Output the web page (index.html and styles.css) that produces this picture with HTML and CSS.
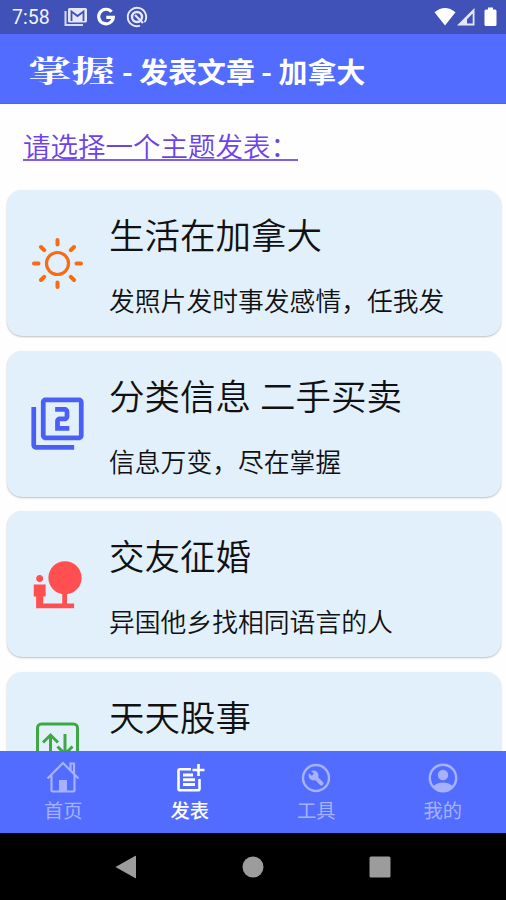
FILE: index.html
```
<!DOCTYPE html>
<html lang="zh-CN">
<head>
    <meta charset="UTF-8">
    <meta name="viewport" content="width=device-width, initial-scale=1.0">
    <title>掌握 - 发表文章</title>
    <link rel="stylesheet" href="styles.css">
</head>
<body>
    <div class="app">
        <div class="status-bar">
            <span class="time">7:58</span>
            <!-- Gmail -->
            <svg class="icon-mail" width="24" height="20" viewBox="0 0 24 20">
                <path d="M1.5 4v14H19" fill="none" stroke="#d5daf5" stroke-width="2"/>
                <rect x="4" y="1" width="19" height="14.5" rx="1.5" fill="#e4e7fa"/>
                <path d="M7.5 14V4.5l6 4.5 6-4.5V14" fill="none" stroke="#4051b8" stroke-width="1.8"/>
            </svg>
            <svg class="icon-google" width="20" height="20" viewBox="0 0 20 20">
                <path d="M15.6 4.8A7.3 7.3 0 1 0 17.3 10.3H10.3" fill="none" stroke="#fff" stroke-width="3.2"/>
            </svg>
            <svg class="icon-circle" width="22" height="22" viewBox="0 0 22 22" fill="none" stroke="#e8eafa">
                <path d="M14 19.7A9.2 9.2 0 1 1 18.5 16.3" stroke-width="1.9"/>
                <circle cx="11" cy="11" r="5" stroke-width="2.4"/>
                <path d="M9 9l8 8" stroke-width="2.2"/>
            </svg>
            <div class="status-right">
                <svg width="22" height="20" viewBox="0 0 22 20"><path d="M.5 5.2Q11-3.4 21.5 5.2L11 18.5z" fill="#fff"/></svg>
                <svg width="20" height="20" viewBox="0 0 20 20">
                    <path d="M18.5 1v17.5H1z" fill="#e4e7fa"/>
                    <path d="M16.7 6.5v10H11v-4.3z" fill="#4051b8"/>
                </svg>
                <svg class="battery" width="13" height="20" viewBox="0 0 13 20"><path d="M4 .5h5v2h2q1.5 0 1.5 1.5v13.5q0 1.5-1.5 1.5H2Q.5 19 .5 17.5V4Q.5 2.5 2 2.5h2z" fill="#fff"/></svg>
            </div>
        </div>

        <header class="header">
            <span class="brand">掌握</span>
            <h1>- 发表文章 - 加拿大</h1>
        </header>

        <main class="content">
            <a class="prompt">请选择一个主题发表：</a>

            <div class="card">
                <svg class="card-icon" viewBox="0 0 57 57" fill="none" stroke="#fa6a12" stroke-width="4" stroke-linecap="round">
                    <circle cx="28.5" cy="28.5" r="11" stroke-width="3.2"/>
                    <path d="M28.5 5v4.5M28.5 47.5V52M5 28.5h4.5M47.5 28.5H52M12 12l3.2 3.2M41.8 41.8L45 45M12 45l3.2-3.2M41.8 15.2L45 12"/>
                </svg>
                <div class="card-body">
                    <h2>生活在加拿大</h2>
                    <p>发照片发时事发感情，任我发</p>
                </div>
            </div>

            <div class="card">
                <svg class="card-icon" viewBox="0 0 24 24" fill="#4a60f5">
                    <path d="M3 5H1v16c0 1.1.9 2 2 2h16v-2H3V5zm18-4H7c-1.1 0-2 .9-2 2v14c0 1.1.9 2 2 2h14c1.1 0 2-.9 2-2V3c0-1.1-.9-2-2-2zm0 16H7V3h14v14zm-4-4h-4v-2h2c1.1 0 2-.89 2-2V7c0-1.11-.9-2-2-2h-4v2h4v2h-2c-1.1 0-2 .89-2 2v4h6v-2z"/>
                </svg>
                <div class="card-body">
                    <h2>分类信息 二手买卖</h2>
                    <p>信息万变，尽在掌握</p>
                </div>
            </div>

            <div class="card">
                <svg class="card-icon" viewBox="0 0 24 24" fill="#ff4f50">
                    <path d="M22.17 9.17c0-3.87-3.13-7-7-7s-7 3.13-7 7c0 3.47 2.52 6.34 5.83 6.89V20H6v-3h1v-5H2v5h1v5h16v-2h-3v-3.88c3.47-.41 6.17-3.36 6.17-6.95zM4.5 11c.83 0 1.5-.67 1.5-1.5S5.33 8 4.5 8 3 8.67 3 9.5 3.67 11 4.5 11z"/>
                </svg>
                <div class="card-body">
                    <h2>交友征婚</h2>
                    <p>异国他乡找相同语言的人</p>
                </div>
            </div>

            <div class="card">
                <svg class="card-icon" viewBox="0 0 57 57" fill="none" stroke="#3fa845" stroke-width="3">
                    <rect x="8.5" y="8" width="40" height="40" rx="4"/>
                    <path d="M21.5 39V19M14 26.5l7.5-7.5 7.5 7.5M36 18v20M28.5 30.5L36 38l7.5-7.5"/>
                </svg>
                <div class="card-body">
                    <h2>天天股事</h2>
                </div>
            </div>
        </main>

        <nav class="tabs">
            <div class="tab">
                <svg viewBox="0 0 34 34" fill="none" stroke="currentColor" stroke-width="2.2">
                    <path d="M1.5 17.5L17 2l15.500 15.500M5.500 14v15.500q0 1 1 1h21q1 0 1-1V14M24.500 9V2.500H28V13"/>
                    <path d="M13 19h8v11h-8z" fill="currentColor" stroke="none"/>
                </svg>
                <span>首页</span>
            </div>
            <div class="tab active">
                <svg viewBox="0 0 34 34" fill="none" stroke="currentColor" stroke-width="2.6">
                    <path d="M18 8.3H7q-1.5 0-1.5 1.5v18q0 1.5 1.5 1.5h18q1.5 0 1.5-1.5V18"/>
                    <path d="M10 14h10M10 18.7h12M10 23.5h12" stroke-width="3"/>
                    <path d="M25.5 3v12M19.5 9h12"/>
                </svg>
                <span>发表</span>
            </div>
            <div class="tab">
                <svg viewBox="0 0 34 34">
                    <circle cx="17" cy="17" r="13" fill="none" stroke="currentColor" stroke-width="2.4"/>
                    <circle cx="14.5" cy="14.5" r="5" fill="currentColor"/>
                    <path d="M15 15l7.5 7.5" stroke="currentColor" stroke-width="4" stroke-linecap="round"/>
                    <path d="M9 9l4.8 4.8" stroke="#516cff" stroke-width="3"/>
                </svg>
                <span>工具</span>
            </div>
            <div class="tab">
                <svg viewBox="0 0 34 34">
                    <circle cx="17" cy="17" r="13.2" fill="none" stroke="currentColor" stroke-width="2.4"/>
                    <circle cx="17" cy="14" r="5.2" fill="currentColor"/>
                    <path d="M7 25.5q4-4 10-4t10 4q-4 5.5-10 5.5T7 25.5z" fill="currentColor"/>
                </svg>
                <span>我的</span>
            </div>
        </nav>

        <div class="system-nav">
            <svg width="22" height="24" viewBox="0 0 22 24"><path d="M.5 12L20 1q1-.5 1 .5v21q0 1-1 .5z"/></svg>
            <svg width="22" height="22" viewBox="0 0 22 22"><circle cx="11" cy="11" r="10.5"/></svg>
            <svg width="22" height="22" viewBox="0 0 22 22"><rect x=".5" y=".5" width="21" height="21" rx="1.5"/></svg>
        </div>
    </div>
</body>
</html>
```
FILE: styles.css
```
* {
    margin: 0;
    padding: 0;
    box-sizing: border-box;
}

body {
    font-family: 'Noto Sans CJK SC', sans-serif;
    background: #fefefe;
    color: #111;
}

svg {
    display: block;
    flex-shrink: 0;
}

.app {
    height: 900px;
    display: flex;
    flex-direction: column;
    overflow: hidden;
}

.status-bar {
    height: 34px;
    flex-shrink: 0;
    display: flex;
    align-items: center;
    padding: 0 9px 0 12px;
    background: #4051b8;
}

.time {
    width: 52px;
    font-family: Roboto, sans-serif;
    font-size: 19.5px;
    line-height: 34px;
    padding-top: 2px;
    color: #f2f3fc;
}

.icon-google {
    margin-left: 8px;
}

.icon-circle {
    margin-left: 10px;
}

.status-right {
    display: flex;
    align-items: center;
    margin-left: auto;
}

.battery {
    margin-left: 8px;
}

.header {
    height: 70px;
    flex-shrink: 0;
    display: flex;
    align-items: center;
    padding-left: 28px;
    padding-top: 3px;
    background: #516cff;
    border-bottom: 1px solid #4862f2;
    color: #fff;
}

.brand {
    width: 94px;
    font-family: 'Noto Serif CJK SC', 'Noto Sans CJK SC', serif;
    font-size: 29px;
    font-weight: 700;
    line-height: 40px;
    white-space: nowrap;
    transform: scaleX(1.5);
    transform-origin: left center;
}

.header h1 {
    font-size: 28.9px;
    font-weight: 700;
    line-height: 38px;
    white-space: nowrap;
}

.content {
    flex: 1;
    min-height: 0;
    overflow: hidden;
    padding: 22px 5px 0 7px;
}

.prompt {
    display: block;
    width: max-content;
    height: 64px;
    margin-left: 16px;
    font-size: 27.5px;
    font-weight: 350;
    line-height: 38px;
    color: #6d42e8;
    text-decoration: underline;
    text-decoration-color: #7f5cf0;
    text-decoration-thickness: 2px;
    text-underline-offset: 2px;
}

.card {
    height: 146px;
    margin-bottom: 14.5px;
    display: flex;
    align-items: center;
    padding-left: 22px;
    background: #e2f0fc;
    border-radius: 15px;
    box-shadow: 0 1px 2px rgba(0, 0, 0, 0.25);
}

.card-icon {
    width: 57px;
    height: 57px;
}

.card-body {
    height: 146px;
    padding-top: 19px;
    margin-left: 23px;
}

.card h2 {
    font-size: 35.5px;
    font-weight: 350;
    line-height: 50px;
    word-spacing: 1px;
}

.card p {
    margin-top: 21px;
    font-size: 25.8px;
    font-weight: 350;
    line-height: 40px;
}

.tabs {
    height: 82px;
    flex-shrink: 0;
    display: flex;
    background: #516cff;
}

.tab {
    flex: 1;
    display: flex;
    flex-direction: column;
    align-items: center;
    padding-top: 10px;
    font-size: 19.3px;
    line-height: 30px;
    color: #a6b2ff;
}

.tab svg {
    width: 34px;
    height: 34px;
}

.tab.active {
    color: #fff;
    font-weight: 500;
}

.system-nav {
    height: 67px;
    flex-shrink: 0;
    display: flex;
    justify-content: center;
    align-items: center;
    gap: 105px;
    background: #000;
    fill: #9c9c9c;
}
```
